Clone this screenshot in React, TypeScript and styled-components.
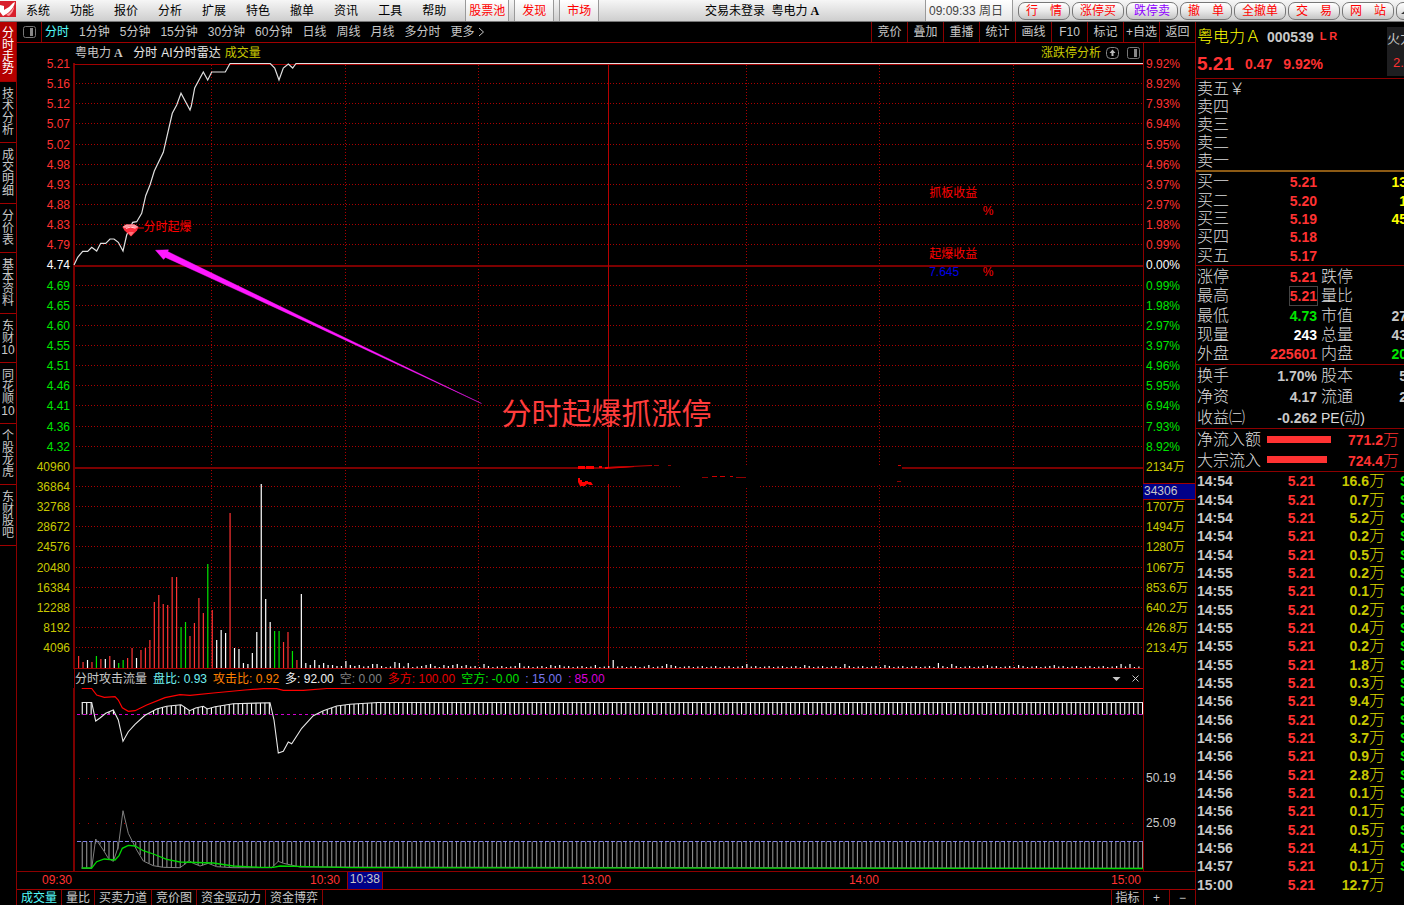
import React from "react";
import styled, { createGlobalStyle } from "styled-components";

const SANS = '"Liberation Sans", "Noto Sans CJK SC", sans-serif';
const LINE = "#8c0000";
const GRID = "#ac0000";
const UP = "#ff3232";
const DOWN = "#00e600";
const SILVER = "#c8c8c8";
const GOLD = "#c8c800";

type Point = [number, number];

const Global = createGlobalStyle`
  * { box-sizing: border-box; }
  body { margin: 0; background: #000; color: ${SILVER}; font: 12px/16px ${SANS}; overflow-x: hidden; }
  button { margin: 0; padding: 0; border: 0; background: none; color: inherit; font: inherit; white-space: nowrap; cursor: pointer; }
  a { color: inherit; text-decoration: none; }
`;

/* ---------- page frame ---------- */

const Page = styled.div`
  display: flex;
  flex-direction: column;
  min-height: 100vh;
`;

const Body = styled.div`
  flex: 1;
  display: flex;
  min-width: 0;
`;

/* ---------- menu bar ---------- */

const MenuBar = styled.header`
  display: flex;
  height: 22px;
  background: linear-gradient(#f6f6f6, #cecece);
  border-bottom: 1px solid #777;
  color: #000;
  overflow: hidden;
`;

const Logo = styled.svg`
  width: 16px;
  height: 18px;
  flex: none;
`;

const MenuNav = styled.nav`
  display: flex;
  gap: 20px;
  margin: 3px 19px 0 10px;
  white-space: nowrap;
`;

const TabGroup = styled.div`
  display: flex;
  gap: 5px;
`;

const MenuTab = styled.button<{ $pad: number }>`
  padding: 1px ${(p) => p.$pad}px 0;
  color: #f00;
  background: linear-gradient(#fff, #e2e2e2);
  border-left: 1px solid #999;
  border-right: 1px solid #999;
`;

const MenuTitle = styled.div`
  flex: 1;
  padding-top: 3px;
  text-align: center;
  white-space: nowrap;

  b { font-family: "Liberation Serif", serif; }
`;

const Clock = styled.div`
  flex: none;
  width: 88px;
  padding: 3px 0 0 3px;
  color: #444;
  background: linear-gradient(#fff, #e6e6e6);
  border-left: 1px solid #999;
  border-right: 1px solid #999;
`;

const TradeButtons = styled.div`
  flex: none;
  display: flex;
  align-items: center;
  gap: 2px;
  width: 391px;
  padding-left: 5px;
  overflow: hidden;
`;

const TradeButton = styled.button<{ $color?: string }>`
  flex: none;
  width: 52px;
  height: 18px;
  line-height: 16px;
  color: ${(p) => p.$color ?? "#f00"};
  background: linear-gradient(#fff, #e8e8e8 50%, #c4c4c4);
  border: 1px solid #777;
  border-radius: 7px;
`;

const RoundButton = styled(TradeButton)`
  padding-left: 4px;
  text-align: left;
`;

/* ---------- side tabs ---------- */

const SideBar = styled.nav`
  flex: none;
  width: 17px;
  display: flex;
  flex-direction: column;
  border-right: 1px solid ${LINE};
`;

const SideTab = styled.button<{ $active?: boolean }>`
  display: flex;
  flex-direction: column;
  align-items: center;
  padding: ${(p) => (p.$active ? 5 : 6)}px 0 6px;
  line-height: 12px;
  border-bottom: 1px solid #a00000;
  color: ${(p) => (p.$active ? "#fff" : SILVER)};
  background: ${(p) => (p.$active ? "#b40000" : "transparent")};
`;

/* ---------- chart column ---------- */

const ChartColumn = styled.main`
  flex: 1;
  min-width: 0;
  display: flex;
  flex-direction: column;
  border-right: 1px solid ${LINE};
`;

const ToolBar = styled.div`
  display: flex;
  flex: none;
  height: 21px;
  border-bottom: 1px solid #a00000;
  white-space: nowrap;
`;

const PanelToggle = styled.button`
  display: flex;
  align-items: center;
  justify-content: center;
  width: 25px;
  border-right: 1px solid ${LINE};
`;

const Periods = styled.div`
  flex: 1;
  display: flex;
  gap: 10px;
  padding-left: 3px;
`;

const Period = styled.button<{ $active?: boolean }>`
  display: flex;
  align-items: center;
  gap: 3px;
  color: ${(p) => (p.$active ? "#54fcfc" : SILVER)};
`;

const ToolButton = styled.button`
  width: 36px;
  border-left: 1px solid ${LINE};
`;

const AxisRow = styled.section<{ $grow?: number; $height?: number }>`
  display: grid;
  grid-template-columns: 57px minmax(0, 1fr) 52px;
  flex: ${(p) => (p.$grow ? `${p.$grow} 1 0px` : "none")};
  min-height: ${(p) => p.$height ?? 0}px;
`;

const TitleLine = styled.div<{ $edge?: boolean }>`
  grid-column: 2;
  display: flex;
  align-items: center;
  gap: ${(p) => (p.$edge ? 6 : 4)}px;
  padding-left: ${(p) => (p.$edge ? 0 : 1)}px;
  border-left: ${(p) => (p.$edge ? `1px solid ${LINE}` : "none")};
  white-space: nowrap;

  b { font-family: "Liberation Serif", serif; }
`;

const Ink = styled.span<{ $color: string }>`
  color: ${(p) => p.$color};
`;

const Spacer = styled.span`
  flex: 1;
`;

const IconButton = styled.button`
  display: flex;
  margin: 0 3px 0 1px;
`;

const LeftAxis = styled.div`
  display: flex;
  flex-direction: column;
  margin: -9px 0 11px;
  padding-right: 4px;
  text-align: right;
`;

const RightEdge = styled.div`
  position: relative;
  display: flex;
  flex-direction: column;
  border-left: 1px solid ${LINE};
`;

const RightAxis = styled.div`
  flex: 1;
  display: flex;
  flex-direction: column;
  margin: -9px 0 11px;
  padding-left: 2px;
`;

const Tick = styled.span<{ $color: string }>`
  flex: 1;
  display: flex;
  align-items: center;
  color: ${(p) => p.$color};
`;

const LeftTick = styled(Tick)`
  justify-content: flex-end;
`;

const CrossValue = styled.span`
  position: absolute;
  top: 420px;
  left: -1px;
  right: 0;
  height: 17px;
  line-height: 15px;
  padding-left: 1px;
  color: ${SILVER};
  background: #000088;
  border: solid #a00000;
  border-width: 1px 0;
`;

const LevelLabels = styled.div`
  display: flex;
  flex-direction: column;
  gap: 29px;
  padding: 82px 0 0 2px;
`;

const Plot = styled.div`
  position: relative;

  > svg {
    position: absolute;
    width: 100%;
    height: 100%;
    overflow: visible;
  }
`;

const Note = styled.span<{ $x: number; $y: number; $color: string; $size?: number }>`
  position: absolute;
  left: ${(p) => p.$x}%;
  top: ${(p) => p.$y}%;
  font-size: ${(p) => p.$size ?? 12}px;
  line-height: ${(p) => (p.$size ?? 12) + 6}px;
  color: ${(p) => p.$color};
  white-space: nowrap;
`;

const TimeAxis = styled.div`
  position: relative;
  flex: none;
  display: flex;
  height: 18px;
  padding-right: 52px;
  border-top: 1px solid ${LINE};
  color: ${UP};
  text-align: right;
`;

const TimeStart = styled.span`
  width: 57px;
  padding-right: 2px;
`;

const TimeMark = styled.span<{ $span: number }>`
  flex: ${(p) => p.$span} 1 0px;
  padding-right: 2px;
`;

const CrossTime = styled.span`
  position: absolute;
  top: 0;
  left: 28%;
  width: 36px;
  height: 17px;
  line-height: 15px;
  text-align: center;
  color: ${SILVER};
  background: #000088;
  border: solid #a00000;
  border-width: 0 1px;
`;

const BottomTabs = styled.div`
  flex: none;
  display: flex;
  height: 16px;
  border-top: 1px solid #a00000;
  line-height: 17px;
`;

const BottomTab = styled.button<{ $active?: boolean }>`
  padding: 0 4px;
  line-height: 17px;
  border-right: 1px solid ${LINE};
  color: ${(p) => (p.$active ? "#54fcfc" : SILVER)};
`;

const BottomTool = styled.button<{ $wide?: boolean }>`
  width: ${(p) => (p.$wide ? 32 : 26)}px;
  line-height: 17px;
  border-left: 1px solid ${LINE};
`;

/* ---------- quote panel ---------- */

const QuotePanel = styled.aside`
  flex: none;
  display: flex;
  flex-direction: column;
  width: 208px;
  overflow: hidden;
`;

const QuoteHead = styled.div`
  display: flex;
  justify-content: space-between;
  height: 57px;
  padding-left: 1px;
  border-bottom: 1px solid ${LINE};
  overflow: hidden;
`;

const HeadLine = styled.div<{ $gap: number; $height: number }>`
  display: flex;
  align-items: center;
  gap: ${(p) => p.$gap}px;
  height: ${(p) => p.$height}px;
  font-weight: bold;
  font-size: 14px;
  color: ${UP};
`;

const StockName = styled.span`
  font-size: 16px;
  font-weight: 300;
  color: #ff0;
`;

const Flags = styled.span`
  font-size: 11px;
  padding-bottom: 3px;
`;

const LastPrice = styled.span`
  font-size: 19px;
`;

const Sector = styled.div`
  width: 17px;
  height: 49px;
  margin-top: 5px;
  line-height: 24px;
  background: #1e1e20;
  font-size: 13px;
  white-space: nowrap;
  overflow: hidden;
`;

const SectorChange = styled.div`
  padding-left: 6px;
  color: ${UP};
`;

const Block = styled.div<{ $height: number; $line?: string }>`
  display: flex;
  flex-direction: column;
  height: ${(p) => p.$height}px;
  padding: 1px 0 0 1px;
  border-bottom: ${(p) => p.$line ?? `1px solid ${LINE}`};
`;

const StatRow = styled.div`
  flex: 1 1 0px;
  min-height: 0;
  display: grid;
  grid-template-columns: 48px 72px 34px 56px;
  align-items: center;
  line-height: 18px;
  white-space: nowrap;
`;

const Label = styled.span`
  font-size: 16px;
  font-weight: 300;
  color: #dcdcdc;
`;

const Value = styled.span<{ $color?: string; $boxed?: boolean }>`
  justify-self: end;
  font-size: 14px;
  font-weight: bold;
  color: ${(p) => p.$color ?? SILVER};
  outline: ${(p) => (p.$boxed ? "1px solid #444" : "none")};

  small { font-size: 16px; font-weight: 300; }
`;

const SecondLabel = styled(Label)`
  margin-left: 4px;

  b { font-size: 14px; line-height: 14px; }
`;

const FlowRow = styled.div`
  flex: 1;
  display: grid;
  grid-template-columns: 70px 66px 66px;
  align-items: center;
  white-space: nowrap;
`;

const FlowBar = styled.span<{ $width: number }>`
  width: ${(p) => p.$width}px;
  height: 7px;
  margin-bottom: 2px;
  background: ${UP};
`;

const TickTable = styled.table`
  flex: 1;
  width: 214px;
  margin: 0 0 11px 1px;
  table-layout: fixed;
  border-collapse: collapse;
  font-size: 14px;
  font-weight: bold;
  line-height: 16px;

  td { padding: 0; text-align: right; white-space: nowrap; }
  td:nth-child(1) { width: 44px; text-align: left; }
  td:nth-child(2) { width: 74px; color: ${UP}; }
  td:nth-child(3) { width: 70px; color: ${GOLD}; }
  td:nth-child(4) { width: 26px; padding-left: 15px; color: ${DOWN}; text-align: left; }
  small { font-size: 16px; font-weight: 300; line-height: 16px; color: #dcdc00; }
`;

/* ---------- data ---------- */

const MENU = ["系统", "功能", "报价", "分析", "扩展", "特色", "撤单", "资讯", "工具", "帮助"];
const SIDE = ["分时走势", "技术分析", "成交明细", "分价表", "基本资料", "东财10", "同花顺10", "个股龙虎", "东财股吧"];
const PERIODS = ["分时", "1分钟", "5分钟", "15分钟", "30分钟", "60分钟", "日线", "周线", "月线", "多分时"];
const TOOLS = ["竞价", "叠加", "重播", "统计", "画线", "F10", "标记", "+自选", "返回"];
const TABS = ["成交量", "量比", "买卖力道", "竞价图", "资金驱动力", "资金博弈"];

const PRICES = ["5.21", "5.16", "5.12", "5.07", "5.02", "4.98", "4.93", "4.88", "4.83", "4.79", "4.74",
  "4.69", "4.65", "4.60", "4.55", "4.51", "4.46", "4.41", "4.36", "4.32"];
const PERCENTS = ["9.92%", "8.92%", "7.93%", "6.94%", "5.95%", "4.96%", "3.97%", "2.97%", "1.98%", "0.99%", "0.00%",
  "0.99%", "1.98%", "2.97%", "3.97%", "4.96%", "5.95%", "6.94%", "7.93%", "8.92%"];
const VOLUMES = ["40960", "36864", "32768", "28672", "24576", "20480", "16384", "12288", "8192", "4096"];
const AMOUNTS = ["2134万", "", "1707万", "1494万", "1280万", "1067万", "853.6万", "640.2万", "426.8万", "213.4万"];

const priceColor = (i: number) => (i < 10 ? UP : i === 10 ? "#fff" : DOWN);

const TRADES: [string, string][] = [
  ["14:54", "16.6"], ["14:54", "0.7"], ["14:54", "5.2"], ["14:54", "0.2"], ["14:54", "0.5"],
  ["14:55", "0.2"], ["14:55", "0.1"], ["14:55", "0.2"], ["14:55", "0.4"], ["14:55", "0.2"], ["14:55", "1.8"], ["14:55", "0.3"],
  ["14:56", "9.4"], ["14:56", "0.2"], ["14:56", "3.7"], ["14:56", "0.9"], ["14:56", "2.8"], ["14:56", "0.1"], ["14:56", "0.1"],
  ["14:56", "0.5"], ["14:56", "4.1"], ["14:57", "0.1"], ["15:00", "12.7"],
];

const BUYS: [string, string, string][] = [
  ["买一", "5.21", "13"], ["买二", "5.20", "1"], ["买三", "5.19", "45"], ["买四", "5.18", ""], ["买五", "5.17", ""],
];

const PRICE_LINE: Point[] = [
  [0, 202], [3.7, 194.3], [8.7, 188.3], [13.7, 188.3], [17.7, 184.3], [22.7, 188], [26.7, 180.3], [31.7, 180.3],
  [36, 176], [40, 176], [44.3, 179.3], [49, 188], [52.7, 172], [58.7, 159.3], [62.7, 158.7], [67.7, 150.3],
  [71.7, 132.7], [76, 122], [80.3, 108], [89.3, 89.3], [98.3, 50.3], [102.7, 42], [107, 30.3], [116, 47],
  [117.3, 43], [120.7, 25], [129.3, 9], [133.7, 17], [137.7, 9], [151.3, 9], [156, 0.5], [196.3, 0.5],
  [200.7, 5], [205, 17], [209.3, 5], [214.3, 1], [218.7, 5], [222, 0.5], [1069, 0.5],
];

const LONG_LINE: Point[] = [
  [7.7, 0.5], [17.7, 0.5], [22.7, 7], [30.3, 9.3], [41, 8.7], [44.3, 12], [48.3, 19.7], [54.3, 23.3], [61, 22.7],
  [72.7, 17], [91, 9.7], [106, 6.7], [116, 7.3], [139.3, 5], [171, 2], [189.3, 0.7], [202.7, 0.7], [209.3, 2.3],
  [229.3, 2.3], [252.7, 0.5], [1069, 0.5],
];

const ATTACK_LINE: Point[] = [
  [7.7, 14.5], [17.7, 14.5], [21.7, 33], [26, 30], [31.7, 25.3], [39.3, 22], [44.3, 32], [49, 53.3], [54.3, 43.7],
  [61, 36.3], [71, 27.3], [82.7, 21], [92.7, 18.3], [107, 16.7], [115.7, 22.7], [121.7, 20], [129.3, 18.3],
  [133.3, 21], [141, 18.7], [159.3, 15.7], [196, 14.7], [200, 32], [204.3, 65], [209.3, 63.3], [214.3, 54],
  [217.7, 55.7], [227.7, 40.3], [239.3, 27.7], [249.3, 22.7], [262.7, 18], [276, 16.3], [304, 14.5], [1069, 14.5],
];

const EMPTY_LINE: Point[] = [
  [7.7, 180.3], [17.7, 180.3], [21.7, 151], [29.3, 162], [34.3, 170.3], [39.3, 173.3], [44.3, 158.7], [49, 122.7],
  [54.3, 145.3], [62.7, 162], [69.3, 173], [79.3, 177.7], [89.3, 179.3], [106, 179.7], [111, 176], [115, 172.7],
  [119.3, 175.3], [126, 178], [134.3, 175.3], [142.7, 178.7], [159.3, 179.7], [197.7, 179.7], [204.3, 173.3],
  [209.3, 175.3], [226, 179], [1069, 180.3],
];

const SHORT_LINE: Point[] = [
  [7.7, 180], [17.7, 180], [22.7, 173.7], [30.3, 171], [41, 172], [45, 167.7], [48.3, 160.3], [54.3, 157.3],
  [61, 158], [69.3, 162.7], [79.3, 166], [92.7, 171.3], [106, 174], [139.3, 175], [159.3, 178], [186, 179.3],
  [199.3, 179.3], [206, 178], [232.7, 178.7], [276, 179.7], [1069, 180.5],
];

const BAR_HEIGHTS = [
  12, 6, 8, 6, 12, 9, 9, 12, 8, 5, 8, 10, 20, 10, 18, 20, 28, 66, 73, 64, 63, 91, 91, 41, 46, 32, 45, 70, 55, 104,
  58, 28, 38, 35, 155, 20, 19, 5, 4, 15, 36, 184, 69, 46, 37, 37, 26, 36, 17, 8, 74, 5, 3, 8, 3, 5, 3, 3, 2, 2,
];
const BAR_KINDS = "rrwrgrwrwggrrwrrrrrrrrrggrrrrgrwwwrwwwwwwwwwggrrgrw";
const BAR_COLORS: Record<string, string> = { r: "#ff3232", g: "#00e600", w: "#ffffff" };
const LATE_PEAKS: Record<number, number> = {
  60: 7, 61: 3, 63: 3, 66: 4, 67: 4, 71: 6, 72: 5, 74: 5, 78: 3, 79: 4, 82: 3, 84: 3, 85: 4, 87: 3, 91: 4, 99: 5,
  106: 3, 108: 3, 116: 3, 120: 8, 128: 3, 132: 4, 133: 3, 150: 4, 163: 3, 172: 4, 181: 3, 193: 5, 196: 4, 204: 3,
  211: 3, 219: 3, 234: 4, 236: 4,
};
const barHeight = (i: number) => BAR_HEIGHTS[i] ?? LATE_PEAKS[i] ?? 1 + ((i * 7) % 3) / 2;

const STEP = 4.455;
const ROW = 20.14;
const toPoints = (line: Point[]) => line.map((p) => p.join(",")).join(" ");

function valueAt(line: Point[], x: number) {
  const n = line.findIndex((p) => p[0] >= x);
  if (n <= 0) return line[n === 0 ? 0 : line.length - 1][1];
  const [x0, y0] = line[n - 1];
  const [x1, y1] = line[n];
  return y0 + ((y1 - y0) * (x - x0)) / (x1 - x0);
}

/* ---------- drawings ---------- */

const PanelIcon = () => (
  <svg width="13" height="12" viewBox="0 0 13 12" fill="none">
    <rect x="0.5" y="0.5" width="12" height="11" rx="2" stroke="#777" />
    <rect x="7" y="2" width="3" height="8" fill="#888" />
  </svg>
);

const UploadIcon = () => (
  <svg width="13" height="12" viewBox="0 0 13 12" fill="none">
    <rect x="0.5" y="0.5" width="12" height="11" rx="4" stroke="#888" />
    <path d="M6.5 2.5 L9.5 6 H7.5 V9 H5.5 V6 H3.5 Z" fill="#bbb" />
  </svg>
);

function PriceChart() {
  const rows = Array.from({ length: 29 }, (_, i) => i + 1);
  const cols = [137.5, 271.5, 404.5, 672.5, 805.5, 939.5];
  return (
    <svg viewBox="0 0 1069 606" preserveAspectRatio="none" aria-label="分时走势图">
      <g shapeRendering="crispEdges">
        {rows.filter((i) => i !== 10 && i !== 20).map((i) => (
          <line key={i} x1="2" x2="1069" y1={Math.round(i * ROW) + 0.5} y2={Math.round(i * ROW) + 0.5} stroke={GRID} strokeDasharray="1 2" />
        ))}
        {cols.map((x) => (
          <line key={x} x1={x} x2={x} y1="2" y2="605" stroke={GRID} strokeDasharray="1 2" />
        ))}
        <path d="M0 0V606" stroke="#7c0000" strokeWidth="2" />
        <path d="M0 203H1069M0 405H1069" stroke="#7c0000" strokeWidth="2" />
        <path d="M534.5 0V605" stroke="#b40000" />
        <path d="M0 1H1069M0 605.5H1069" stroke="#a00000" />
      </g>
      {/* erased strip across the separator with leftover red specks */}
      <path d="M534 405 L620 402 H828 V408 L815 422 H780 V423 H684 V424 H606 V421 H534Z" fill="#000" />
      <g fill="#f00">
        <path d="M504 403h7v3h-7zM512 403h8v3h-8zM525 403h3v2h-3zM531 404l29-1v1l-29 2z" />
        <path d="M504 415h2v2h2v2h3v-1h3v1h3l2 3h-3l-3-1-2 2h-5l-2-4z" />
        <path d="M535 404l43-2v1l-43 2z" fill="#c00000" />
        <path d="M638 413h5v1h-5zM646 413h5v1h-5zM656 413h3v1h-3zM824 402h3v1h-3z" fill="#d00000" />
        <path d="M580 402h5v1h-5zM594 402h3v1h-3zM628 414h6v1h-6zM662 414h10v1h-10zM823 418h4v1h-4z" fill="#900000" />
      </g>
      {Array.from({ length: 239 }, (_, i) => (
        <rect key={i} x={4 + i * STEP} y={605 - barHeight(i)} width="1.2" height={barHeight(i)} fill={BAR_COLORS[BAR_KINDS[i] ?? "w"]} />
      ))}
      <polyline points={toPoints(PRICE_LINE)} fill="none" stroke="#e0e0e0" strokeWidth="1.2" />
      <path d="M48.5 164 L52 161.5 H60.5 L64.5 164 L63 167.5 L57 173.5 L50.5 167.5 Z" fill="#ff2c3c" />
      <path d="M48.5 164 L52 161.5 H60.5 L64.5 164 L62 165 L56.5 163.2 L51 165 Z" fill="#ff9aa2" />
      <path d="M52 165.4 L56.5 164 L61.5 165.2" fill="none" stroke="#fff" strokeWidth="0.8" />
      <path d="M54 169 L57 173 L60 169Z" fill="#ff7078" />
      <path d="M64 165H70" stroke="#f00" />
      <path d="M81.5 187.2 L94.5 186.8 L93.8 188.6 L230 255 L407.5 340.5 L229 257.4 L91.5 194.4 L89.5 196.4 Z" fill="#ff18ff" stroke="#ff18ff" strokeWidth="0.4" />
    </svg>
  );
}

function AttackChart() {
  const xs = Array.from({ length: 239 }, (_, i) => 7.7 + i * STEP);
  return (
    <svg viewBox="0 0 1069 183" preserveAspectRatio="none" aria-label="分时攻击流量图">
      <g shapeRendering="crispEdges">
        <path d="M0 0V183" stroke="#7c0000" strokeWidth="2" />
        <path d="M5 90.5H1064M5 135.5H1064" stroke="#b00000" strokeDasharray="1 8" />
      </g>
      {xs.map((x) => {
        const y = valueAt(ATTACK_LINE, x);
        return y < 26 ? <rect key={x} x={x} y={y} width="1.1" height={26.5 - y} fill="#fff" /> : null;
      })}
      {xs.map((x) => {
        const y = valueAt(EMPTY_LINE, x);
        return y > 154 ? <rect key={x} x={x} y="153.5" width="1.1" height={y - 153.5} fill="#909090" /> : null;
      })}
      <g shapeRendering="crispEdges">
        <path d="M3 26.5H1069" stroke="#d000d0" strokeDasharray="3 3" />
        <path d="M3 153.5H1069" stroke="#8080e8" strokeDasharray="4 2" />
      </g>
      <polyline points={toPoints(EMPTY_LINE)} fill="none" stroke="#808080" />
      <polyline points={toPoints(SHORT_LINE)} fill="none" stroke="#00d800" strokeWidth="1.3" />
      <polyline points={toPoints(ATTACK_LINE)} fill="none" stroke="#e8e8e8" strokeWidth="1.1" />
      <polyline points={toPoints(LONG_LINE)} fill="none" stroke="#f00" strokeWidth="1.2" />
    </svg>
  );
}

/* ---------- sections ---------- */

const splitSide = (name: string) => name.match(/\d+|./g) ?? [];

function TopMenu() {
  return (
    <MenuBar>
      <Logo viewBox="0 0 16 18">
        <rect y="1" width="16" height="16" fill="#d8202c" />
        <path d="M0 5 L4 6 V10 Q9 8 13 3 L15 2 Q14 8 8 13 L3 16 L0 12 Z" fill="#fff" />
        <path d="M6 15 Q12 12 14 6 Q14 12 9 16Z" fill="#ff9aa0" />
      </Logo>
      <MenuNav>
        {MENU.map((m) => <a key={m} href="#">{m}</a>)}
      </MenuNav>
      <TabGroup>
        <MenuTab $pad={3}>股票池</MenuTab>
        <MenuTab $pad={7}>发现</MenuTab>
        <MenuTab $pad={7}>市场</MenuTab>
      </TabGroup>
      <MenuTitle>交易未登录&nbsp; 粤电力<b> A</b></MenuTitle>
      <Clock>09:09:33 周日</Clock>
      <TradeButtons>
        <TradeButton>行　情</TradeButton>
        <TradeButton>涨停买</TradeButton>
        <TradeButton $color="#9000ff">跌停卖</TradeButton>
        <TradeButton>撤　单</TradeButton>
        <TradeButton>全撤单</TradeButton>
        <TradeButton>交　易</TradeButton>
        <TradeButton>网　站</TradeButton>
        <RoundButton aria-label="更多">
          <svg width="6" height="6" viewBox="0 0 6 6"><path d="M0 5 L5 1 V5Z" fill="#333" /></svg>
        </RoundButton>
      </TradeButtons>
    </MenuBar>
  );
}

function Quote() {
  return (
    <QuotePanel>
      <QuoteHead>
        <div>
          <HeadLine $gap={6} $height={30}>
            <StockName>粤电力Ａ</StockName>
            <Ink $color={SILVER}>000539</Ink>
            <Flags>L R</Flags>
          </HeadLine>
          <HeadLine $gap={11} $height={24}>
            <LastPrice>5.21</LastPrice>
            <span>0.47</span>
            <span>9.92%</span>
          </HeadLine>
        </div>
        <Sector>
          <div>火力</div>
          <SectorChange>2.</SectorChange>
        </Sector>
      </QuoteHead>
      <Block $height={93} $line="2px solid #8c5a14">
        {["卖五￥", "卖四", "卖三", "卖二", "卖一"].map((s) => (
          <StatRow key={s}><Label>{s}</Label></StatRow>
        ))}
      </Block>
      <Block $height={94}>
        {BUYS.map(([name, price, vol]) => (
          <StatRow key={name}>
            <Label>{name}</Label>
            <Value $color={UP}>{price}</Value>
            <span />
            <Value $color="#ff0">{vol}</Value>
          </StatRow>
        ))}
      </Block>
      <Block $height={99}>
        <StatRow><Label>涨停</Label><Value $color={UP}>5.21</Value><SecondLabel>跌停</SecondLabel></StatRow>
        <StatRow><Label>最高</Label><Value $color={UP} $boxed>5.21</Value><SecondLabel>量比</SecondLabel></StatRow>
        <StatRow><Label>最低</Label><Value $color={DOWN}>4.73</Value><SecondLabel>市值</SecondLabel><Value>27</Value></StatRow>
        <StatRow><Label>现量</Label><Value $color="#fff">243</Value><SecondLabel>总量</SecondLabel><Value>43</Value></StatRow>
        <StatRow><Label>外盘</Label><Value $color={UP}>225601</Value><SecondLabel>内盘</SecondLabel><Value $color={DOWN}>20</Value></StatRow>
      </Block>
      <Block $height={64}>
        <StatRow><Label>换手</Label><Value>1.70%</Value><SecondLabel>股本</SecondLabel><Value>5</Value></StatRow>
        <StatRow><Label>净资</Label><Value>4.17</Value><SecondLabel>流通</SecondLabel><Value>2</Value></StatRow>
        <StatRow><Label>收益㈡</Label><Value>-0.262</Value><SecondLabel><b>PE(</b>动<b>)</b></SecondLabel></StatRow>
      </Block>
      <Block $height={43}>
        <FlowRow><Label>净流入额</Label><FlowBar $width={64} /><Value $color={UP}>771.2<small>万</small></Value></FlowRow>
        <FlowRow><Label>大宗流入</Label><FlowBar $width={60} /><Value $color={UP}>724.4<small>万</small></Value></FlowRow>
      </Block>
      <TickTable>
        <tbody>
          {TRADES.map(([time, vol], i) => (
            <tr key={i}>
              <td>{time}</td>
              <td>5.21</td>
              <td>{vol}<small>万</small></td>
              <td>{i < TRADES.length - 1 ? "S" : ""}</td>
            </tr>
          ))}
        </tbody>
      </TickTable>
    </QuotePanel>
  );
}

export default function App() {
  return (
    <Page>
      <Global />
      <TopMenu />
      <Body>
        <SideBar>
          {SIDE.map((name, i) => (
            <SideTab key={name} $active={i === 0}>
              {splitSide(name).map((c, n) => <span key={n}>{c}</span>)}
            </SideTab>
          ))}
        </SideBar>
        <ChartColumn>
          <ToolBar>
            <PanelToggle aria-label="侧栏"><PanelIcon /></PanelToggle>
            <Periods>
              {PERIODS.map((p, i) => <Period key={p} $active={i === 0}>{p}</Period>)}
              <Period>
                更多
                <svg width="7" height="10" viewBox="0 0 7 10" fill="none"><path d="M1 1 L5.5 5 L1 9" stroke={SILVER} /></svg>
              </Period>
            </Periods>
            {TOOLS.map((t) => <ToolButton key={t}>{t}</ToolButton>)}
          </ToolBar>

          <AxisRow $height={20}>
            <TitleLine>
              <span>粤电力<b> A</b></span>
              <Ink $color="#e8e8e8">&nbsp; 分时</Ink>
              <Ink $color="#e8e8e8">AI分时雷达</Ink>
              <Ink $color={GOLD}>成交量</Ink>
              <Spacer />
              <Ink $color={GOLD}>涨跌停分析</Ink>
              <IconButton aria-label="上移"><UploadIcon /></IconButton>
              <IconButton aria-label="侧栏"><PanelIcon /></IconButton>
            </TitleLine>
            <RightEdge />
          </AxisRow>

          <AxisRow $grow={606}>
            <LeftAxis>
              {PRICES.map((p, i) => <LeftTick key={p} $color={priceColor(i)}>{p}</LeftTick>)}
              {VOLUMES.map((v) => <LeftTick key={v} $color={GOLD}>{v}</LeftTick>)}
            </LeftAxis>
            <Plot>
              <PriceChart />
              <Note $x={6.5} $y={25.5} $color="#f00">分时起爆</Note>
              <Note $x={80} $y={20} $color="#f00">抓板收益</Note>
              <Note $x={85} $y={23} $color="#f00">%</Note>
              <Note $x={80} $y={30} $color="#f00">起爆收益</Note>
              <Note $x={80} $y={33} $color="#0000e8">7.645</Note>
              <Note $x={85} $y={33} $color="#f00">%</Note>
              <Note $x={40} $y={55} $color="#ff3c3c" $size={30}>分时起爆抓涨停</Note>
            </Plot>
            <RightEdge>
              <RightAxis>
                {PERCENTS.map((p, i) => <Tick key={i} $color={priceColor(i)}>{p}</Tick>)}
                {AMOUNTS.map((a, i) => <Tick key={i} $color={GOLD}>{a}</Tick>)}
              </RightAxis>
              <CrossValue>34306</CrossValue>
            </RightEdge>
          </AxisRow>

          <AxisRow $height={19}>
            <TitleLine $edge>
              <span>分时攻击流量</span>
              <Ink $color="#70f0f0">盘比: 0.93</Ink>
              <Ink $color="#ff8000">攻击比: 0.92</Ink>
              <Ink $color="#f0f0f0">多: 92.00</Ink>
              <Ink $color="#808080">空: 0.00</Ink>
              <Ink $color="#e80000">多方: 100.00</Ink>
              <Ink $color="#00e000">空方: -0.00</Ink>
              <Ink $color="#7878f0">: 15.00</Ink>
              <Ink $color="#d800d8">: 85.00</Ink>
              <Spacer />
              <IconButton aria-label="展开">
                <svg width="9" height="9" viewBox="0 0 9 9"><path d="M0.5 3H8.5L4.5 7Z" fill={SILVER} /></svg>
              </IconButton>
              <IconButton aria-label="关闭">
                <svg width="9" height="9" viewBox="0 0 9 9"><path d="M1.5 1.5 L7.5 7.5 M7.5 1.5 L1.5 7.5" stroke={SILVER} /></svg>
              </IconButton>
            </TitleLine>
            <RightEdge />
          </AxisRow>

          <AxisRow $grow={183}>
            <span />
            <Plot><AttackChart /></Plot>
            <RightEdge>
              <LevelLabels>
                <span>50.19</span>
                <span>25.09</span>
              </LevelLabels>
            </RightEdge>
          </AxisRow>

          <TimeAxis>
            <TimeStart>09:30</TimeStart>
            <TimeMark $span={268}>10:30</TimeMark>
            <TimeMark $span={271}>13:00</TimeMark>
            <TimeMark $span={268}>14:00</TimeMark>
            <TimeMark $span={262}>15:00</TimeMark>
            <CrossTime>10:38</CrossTime>
          </TimeAxis>

          <BottomTabs>
            {TABS.map((t, i) => <BottomTab key={t} $active={i === 0}>{t}</BottomTab>)}
            <Spacer />
            <BottomTool $wide>指标</BottomTool>
            <BottomTool>+</BottomTool>
            <BottomTool>−</BottomTool>
          </BottomTabs>
        </ChartColumn>
        <Quote />
      </Body>
    </Page>
  );
}
